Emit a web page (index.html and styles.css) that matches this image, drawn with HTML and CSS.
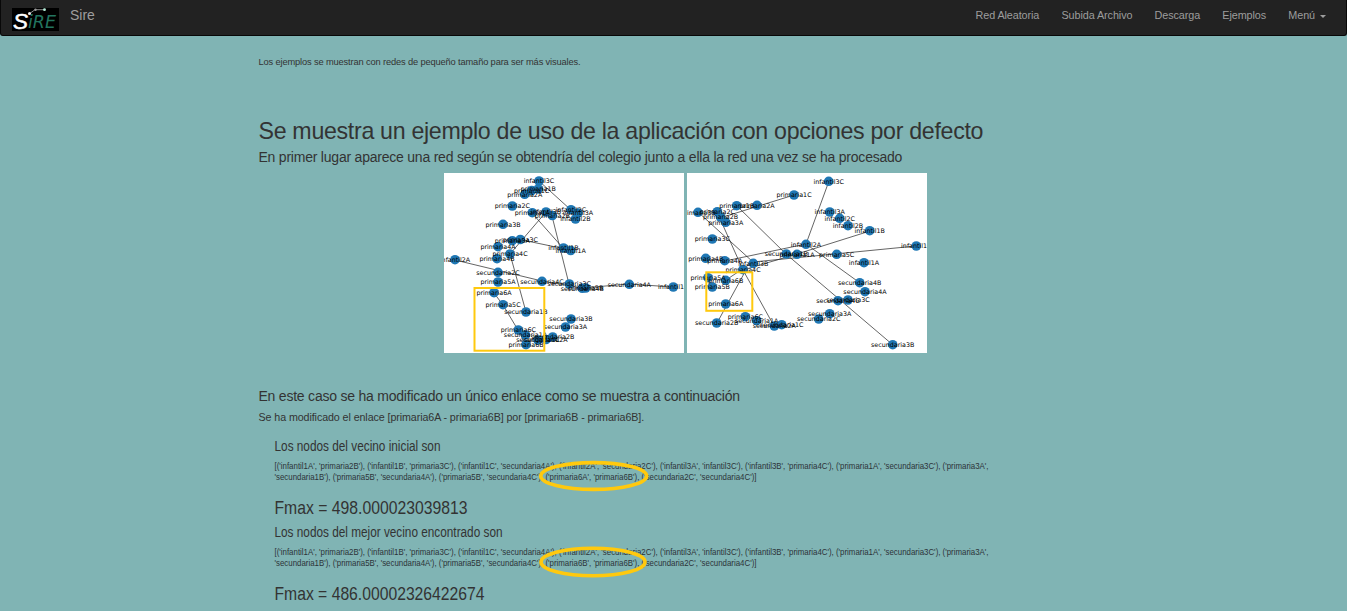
FILE: index.html
```
<!DOCTYPE html>
<html lang="es">
<head>
<meta charset="utf-8">
<title>Sire</title>
<link rel="stylesheet" href="styles.css">
</head>
<body>
<nav class="navbar">
  <div class="brand">
    <svg class="logo" viewBox="0 0 47 23" width="47" height="23">
      <rect width="47" height="23" fill="#000"/>
      <text class="logo-s" x="1" y="20.5" textLength="15" lengthAdjust="spacingAndGlyphs">S</text>
      <text class="logo-ire" x="16" y="20" textLength="28" lengthAdjust="spacingAndGlyphs">iRE</text>
      <path d="M17 6L23 1.7H32" fill="none" stroke="#888" stroke-width="1"/>
      <circle cx="17.5" cy="5.5" r="1.5" fill="#eee"/><circle cx="23.5" cy="1.7" r="1.2" fill="#999"/><circle cx="32.5" cy="1.7" r="1.4" fill="#b5eed9"/>
    </svg>
    <span>Sire</span>
  </div>
  <div class="links"><a>Red Aleatoria</a><a>Subida Archivo</a><a>Descarga</a><a>Ejemplos</a><a>Menú<i class="caret"></i></a></div>
</nav>
<main class="content">
  <p class="note"><span>Los ejemplos se muestran con redes de pequeño tamaño para ser más visuales.</span></p>
  <h2 class="title"><span>Se muestra un ejemplo de uso de la aplicación con opciones por defecto</span></h2>
  <h4 class="subtitle"><span>En primer lugar aparece una red según se obtendría del colegio junto a ella la red una vez se ha procesado</span></h4>
  <div class="graphs">
    <svg class="graph" id="initial" viewBox="444 173 240 180"></svg>
    <svg class="graph" id="processed" viewBox="687 173 240 180"></svg>
  </div>
  <h4 class="change"><span>En este caso se ha modificado un único enlace como se muestra a continuación</span></h4>
  <p class="link-change"><span>Se ha modificado el enlace [primaria6A - primaria6B] por [primaria6B - primaria6B].</span></p>
  <svg class="results" viewBox="258 435 854 176" width="854" height="176">
    <text class="r-head" x="274.5" y="451" textLength="166" lengthAdjust="spacingAndGlyphs">Los nodos del vecino inicial son</text>
    <text class="r-list" x="274.5" y="469.3" textLength="714" lengthAdjust="spacingAndGlyphs">[('infantil1A', 'primaria2B'), ('infantil1B', 'primaria3C'), ('infantil1C', 'secundaria4A'), ('infantil2A', 'secundaria2C'), ('infantil3A', 'infantil3C'), ('infantil3B', 'primaria4C'), ('primaria1A', 'secundaria3C'), ('primaria3A',</text>
    <text class="r-list" x="274.5" y="479.6" textLength="482" lengthAdjust="spacingAndGlyphs">'secundaria1B'), ('primaria5B', 'secundaria4A'), ('primaria5B', 'secundaria4C'), ('primaria6A', 'primaria6B'), ('secundaria2C', 'secundaria4C')]</text>
    <text class="r-max" x="274.5" y="514" textLength="193" lengthAdjust="spacingAndGlyphs">Fmax = 498.000023039813</text>
    <text class="r-head" x="274.5" y="537" textLength="228" lengthAdjust="spacingAndGlyphs">Los nodos del mejor vecino encontrado son</text>
    <text class="r-list" x="274.5" y="555.3" textLength="714" lengthAdjust="spacingAndGlyphs">[('infantil1A', 'primaria2B'), ('infantil1B', 'primaria3C'), ('infantil1C', 'secundaria4A'), ('infantil2A', 'secundaria2C'), ('infantil3A', 'infantil3C'), ('infantil3B', 'primaria4C'), ('primaria1A', 'secundaria3C'), ('primaria3A',</text>
    <text class="r-list" x="274.5" y="565.6" textLength="482" lengthAdjust="spacingAndGlyphs">'secundaria1B'), ('primaria5B', 'secundaria4A'), ('primaria5B', 'secundaria4C'), ('primaria6B', 'primaria6B'), ('secundaria2C', 'secundaria4C')]</text>
    <text class="r-max" x="274.5" y="600" textLength="210" lengthAdjust="spacingAndGlyphs">Fmax = 486.00002326422674</text>
    <ellipse class="mark" cx="593.7" cy="476" rx="53" ry="13.4"/>
    <ellipse class="mark" cx="593" cy="562" rx="52" ry="13.8"/>
  </svg>
</main>
<script src="graphs.js"></script>
</body>
</html>
```
FILE: styles.css
```
* { box-sizing: border-box; }
html, body { height: 100%; }
body {
  margin: 0;
  overflow: hidden;
  background: #80b4b4;
  color: #333;
  font-family: "Liberation Sans", Arial, sans-serif;
}
.navbar {
  display: flex;
  justify-content: space-between;
  height: 36px;
  padding: 0 20px 0 11px;
  background: #222;
  border: 1px solid #080808;
  border-top: 0;
  border-radius: 0 0 3px 3px;
  color: #9d9d9d;
}
.brand { display: flex; gap: 11px; font-size: 14px; line-height: 31px; }
.logo { margin-top: 8px; }
.logo-s { font: italic 22px "Liberation Sans", sans-serif; fill: #fff; stroke: #fff; stroke-width: .5; }
.logo-ire { font: italic 18px "DejaVu Sans", sans-serif; fill: #23745f; }
.links { display: flex; gap: 22.2px; font-size: 10.8px; line-height: 31px; letter-spacing: -.08px; }
.caret {
  display: inline-block;
  margin-left: 5px;
  vertical-align: middle;
  border: 3px solid transparent;
  border-top-color: #9d9d9d;
  border-bottom: 0;
}
.content { width: 854px; margin: 0 0 0 258px; }
.content p, .content h2, .content h4 { margin: 0; font-weight: 400; white-space: nowrap; }
.content .note { height: 81px; padding-top: 21px; font-size: 9.3px; line-height: 11px; letter-spacing: -.145px; }
.content .title { height: 30px; font-size: 23.2px; line-height: 28px; letter-spacing: -.31px; }
.content .subtitle { height: 26px; font-size: 14px; line-height: 20px; letter-spacing: -.22px; }
.graphs { display: flex; justify-content: center; gap: 3px; height: 180px; }
.graph { width: 240px; height: 180px; background: #fff; }
.graph text { font: 6.35px "DejaVu Sans", sans-serif; text-anchor: middle; fill: #000; }
.graph circle { fill: #1f77b4; }
.graph path { fill: none; stroke: #222; stroke-width: .7; }
.graph rect { fill: none; stroke: #ffc90e; stroke-width: 2; }
.content .change { height: 55px; padding-top: 33px; font-size: 14px; line-height: 20px; letter-spacing: -.22px; }
.content .link-change { height: 27px; padding-top: 2px; font-size: 10.7px; line-height: 14px; letter-spacing: -.085px; }
.note span, .title span, .subtitle span, .change span, .link-change span { margin-left: .5px; }
.results { display: block; }
.r-head { font-size: 13.8px; fill: #333; }
.r-list { font-size: 9.8px; fill: #2c3338; }
.r-max { font-size: 19px; fill: #333; }
.mark { fill: none; stroke: #ffc90e; stroke-width: 3.6; }
```
FILE: graphs.js
```
// Each node: label, centre x, centre y. Each edge: x1, y1, x2, y2.
function drawGraph(id, edges, nodes, box) {
  let out = edges.map(e => `<path d="M${e[0]} ${e[1]}L${e[2]} ${e[3]}"/>`).join("");
  out += nodes.map(n => `<circle cx="${n[1]}" cy="${n[2]}" r="4.8"/>`).join("");
  out += nodes.map(n => `<text x="${n[1]}" y="${n[2] + 2.3}">${n[0]}</text>`).join("");
  out += `<rect x="${box[0]}" y="${box[1]}" width="${box[2]}" height="${box[3]}"/>`;
  document.getElementById(id).innerHTML = out;
}
drawGraph("initial", [
  [539,181,571,210],[532,213,563,248],[546,212,510,254],[520,239.5,570,250],
  [552,216,569,284],[510,254,526,312],[455,260,542,281],[542,281,582,288],
  [494,293,503,305],[503,305,518,330],[518,330,526,345],[582,288,629,284],[629,284,673,287]
], [
  ["infantil3C",539,181],["primaria1B",538.3,189],["primaria1C",531.7,190.5],["primaria2A",524.7,194.3],
  ["primaria2C",512.3,206],["primaria3B",503,224.3],["primaria1A",532.3,212.7],["infantil3B",546,212],
  ["primaria2B",552.3,215.5],["infantil2C",571,209.7],["infantil3A",578,213],["infantil2B",575.5,219],
  ["primaria3A",512.3,240.7],["primaria3C",520.3,239.5],["primaria4A",498,246.7],["primaria4C",510,254],
  ["primaria4B",497,258.7],["infantil2A",455,259.7],["infantil1B",563.5,248],["infantil1A",570.7,250.5],
  ["secundaria2C",498,272.3],["primaria5A",498,282],["secundaria4C",542,281.3],["primaria6A",494,292.7],
  ["primaria5C",503,304.7],["secundaria1B",526,312],["primaria6C",518.3,330],["secundaria1A",525.5,335],
  ["primaria6B",526,344.7],["secundaria1C",538,340],["secundaria2A",546,339.5],["secundaria2B",552.7,337],
  ["secundaria3C",569.3,284],["primaria5B",585.7,288],["secundaria4B",582.3,288.3],["secundaria4A",629.3,284.3],
  ["infantil1C",673.3,287],["secundaria3B",571,319],["secundaria3A",565.5,327]
], [474.5,288,69.8,62.7]);
drawGraph("processed", [
  [794,195,720,218],[829,181,806,244],[870,231,797,254],[797,254,743,270],[916,246,753,262],
  [737,206,786,254],[786,254,893,345],[806,244,860,283],[698,212,753,262],[717,212,743,270],
  [725,261,806,244],[746,270,717,323],[743,270,774,326],[726,280,753,262]
], [
  ["primaria1C",794,195],["primaria1B",736.7,205.7],["primaria2A",757,205.3],["primaria3B",698,212.3],
  ["primaria2C",717.3,211.7],["primaria2B",720.5,217],["primaria3A",725.7,222.3],["primaria3C",712.3,239],
  ["primaria4B",705.7,258.3],["primaria4A",724.7,260.7],["infantil3B",753.3,263.3],["infantil2A",806,244.3],
  ["secundaria1B",786.3,254],["primaria1A",797,254.3],["infantil3C",828.7,181.3],["infantil3A",829.7,212],
  ["infantil2C",839.7,218.3],["infantil2B",848,225.7],["infantil1B",869.7,230.7],["infantil1C",916.3,246],
  ["primaria5C",836.7,254.3],["infantil1A",864,262.7],["primaria4C",743,269.7],["primaria5A",708,277.7],
  ["primaria6B",725.7,280.3],["primaria5B",712.3,287],["primaria6A",725.7,304],["secundaria2B",716.7,323],
  ["primaria6C",745.3,316.7],["secundaria1A",756.7,320.7],["secundaria2A",774.3,326],["secundaria1C",781.7,324.7],
  ["secundaria4B",859.7,282.7],["secundaria4A",865,291.7],["secundaria4C",838,300.7],["secundaria3C",848,300],
  ["secundaria3A",829.7,313.7],["secundaria2C",818.7,319],["secundaria3B",892.7,344.7]
], [706.3,272.3,46,38.5]);
```
